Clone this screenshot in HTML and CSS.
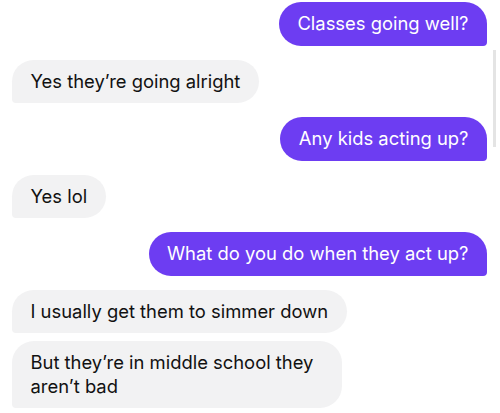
FILE: index.html
```html
<!DOCTYPE html>
<html lang="en">
<head>
<meta charset="utf-8">
<link rel="stylesheet" href="styles.css">
</head>
<body>
<div class="chat">
  <div class="msg out">Classes going well?</div>
  <div class="msg in">Yes they’re going alright</div>
  <div class="msg out">Any kids acting up?</div>
  <div class="msg in">Yes lol</div>
  <div class="msg out">What do you do when they act up?</div>
  <div class="msg in">I usually get them to simmer down</div>
  <div class="msg in grouped">But they’re in middle school they aren’t bad</div>
</div>
<div class="scrollbar"></div>
</body>
</html>
```
FILE: styles.css
```css
html, body {
  margin: 0;
  padding: 0;
  background: #ffffff;
}
body {
  width: 500px;
  height: 413px;
  overflow: hidden;
  position: relative;
  font-family: Inter, "Noto Sans", sans-serif;
}
.chat {
  display: flex;
  flex-direction: column;
  padding: 2px 13px 0 12px;
  gap: 14px;
}
.msg {
  box-sizing: border-box;
  font-size: 18.4px;
  line-height: 23.5px;
  padding: 10px 18.5px;
  border-radius: 22px;
  max-width: 346px;
}
.out {
  align-self: flex-end;
  background: #6d3df2;
  color: #ffffff;
  border-bottom-right-radius: 4px;
}
.in {
  align-self: flex-start;
  background: #f2f2f3;
  color: #111111;
  border-bottom-left-radius: 4px;
}
.grouped {
  margin-top: -6px;
  max-width: 330px;
}
.scrollbar {
  position: absolute;
  left: 493px;
  top: 50px;
  width: 3px;
  height: 97px;
  background: #e4e4e4;
}
```
